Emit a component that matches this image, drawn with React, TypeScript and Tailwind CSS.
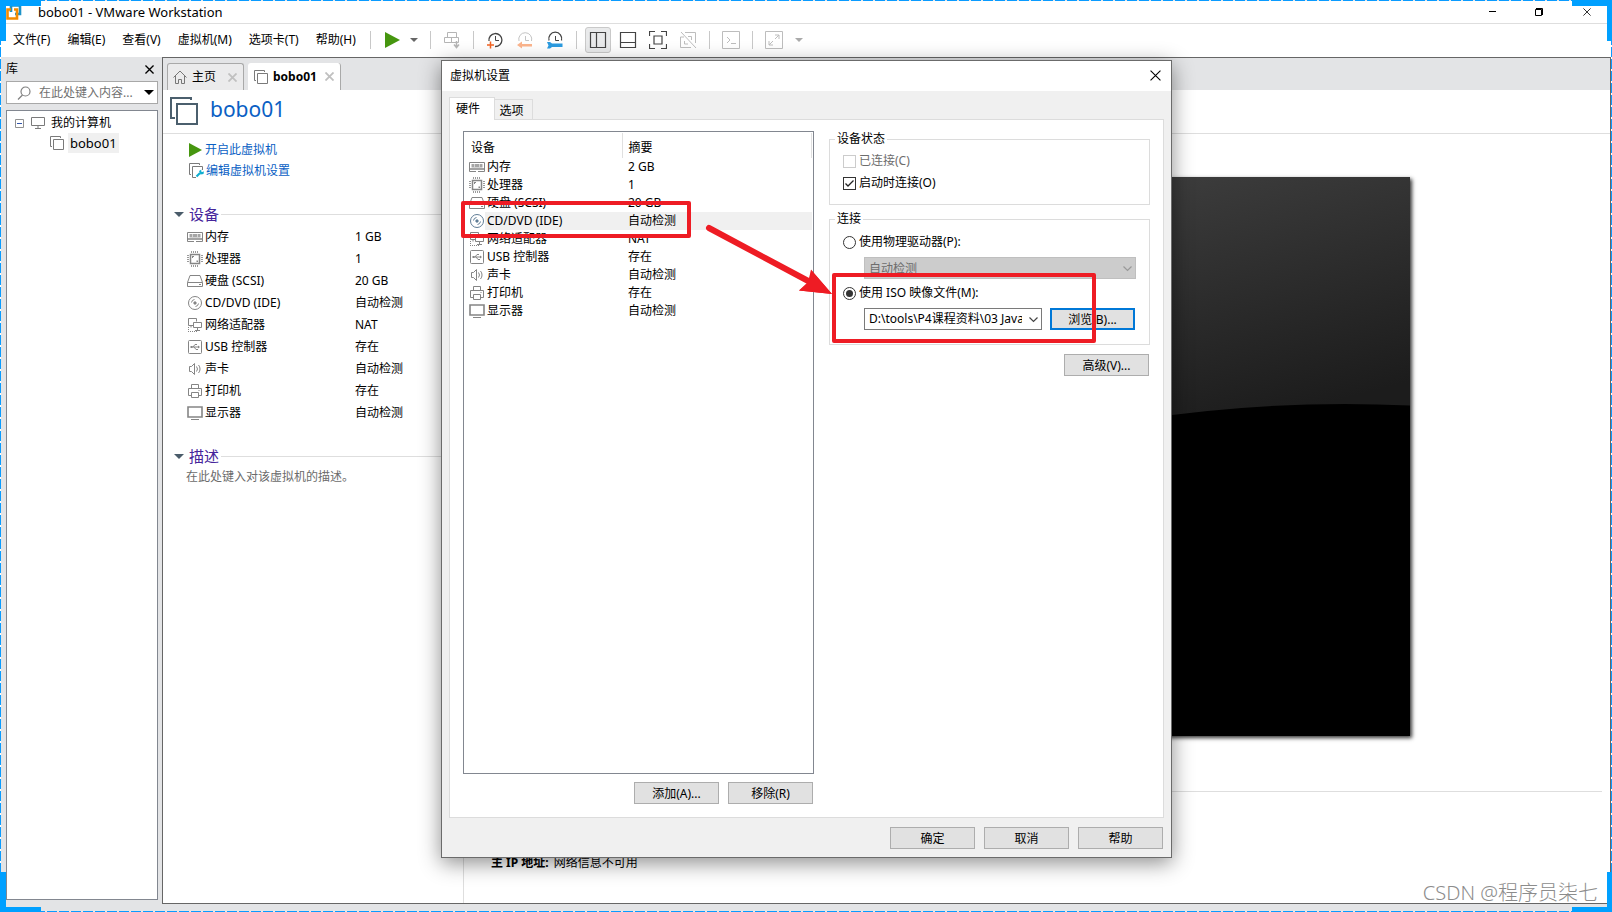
import type { ReactNode } from 'react';

type IconName = 'memory' | 'cpu' | 'disk' | 'cd' | 'network' | 'usb' | 'sound' | 'printer' | 'display';

// Devices of the virtual machine: the summary page and the settings dialog show different memory sizes
const DEVICES: { icon: IconName; name: string; summary: string; setting: string }[] = [
  { icon: 'memory', name: '内存', summary: '1 GB', setting: '2 GB' },
  { icon: 'cpu', name: '处理器', summary: '1', setting: '1' },
  { icon: 'disk', name: '硬盘 (SCSI)', summary: '20 GB', setting: '20 GB' },
  { icon: 'cd', name: 'CD/DVD (IDE)', summary: '自动检测', setting: '自动检测' },
  { icon: 'network', name: '网络适配器', summary: 'NAT', setting: 'NAT' },
  { icon: 'usb', name: 'USB 控制器', summary: '存在', setting: '存在' },
  { icon: 'sound', name: '声卡', summary: '自动检测', setting: '自动检测' },
  { icon: 'printer', name: '打印机', summary: '存在', setting: '存在' },
  { icon: 'display', name: '显示器', summary: '自动检测', setting: '自动检测' },
];

const MENUS = ['文件(F)', '编辑(E)', '查看(V)', '虚拟机(M)', '选项卡(T)', '帮助(H)'];

const ICONS: Record<IconName, ReactNode> = {
  memory: (
    <>
      <path d="M.5 3.5h15v9h-15z" />
      <path d="M1 10h14" strokeWidth="1.5" />
      <path d="M2.500 5h11v3.500h-11z" fill="#a5a5a5" stroke="none" />
      <path d="M5.500 5v3.500M10.500 5v3.500" stroke="#d5d5d5" />
      <path d="M7 12.500h2" stroke="#fff" />
    </>
  ),
  cpu: (
    <>
      <path d="M3.5 3.5h9v9h-9z" strokeWidth="1.5" />
      <path
        d="M4.5 0v2m2-2v2m2-2v2m2-2v2M4.5 14v2m2-2v2m2-2v2m2-2v2M0 4.5h2m-2 2h2m-2 2h2m-2 2h2M14 4.5h2m-2 2h2m-2 2h2m-2 2h2"
        stroke="#9a9a9a"
      />
      <path d="M5 5h2v1H6v1H5zM9.500 9.500h1.500v1.500H9.500z" fill="#858585" stroke="none" />
    </>
  ),
  disk: (
    <>
      <path d="M3 2.5h10l2.5 7v4H.5v-4z" />
      <path d="M.5 9.5h15M12 11.5h2" />
    </>
  ),
  cd: (
    <>
      <circle cx="8" cy="8" r="6.5" />
      <circle cx="8" cy="8" r="1.2" fill="currentColor" />
      <path d="M4.500 7.500A3.500 3.500 0 0 1 7.500 4.500M11.500 8.500A3.500 3.500 0 0 1 8.500 11.500" />
    </>
  ),
  network: (
    <>
      <path d="M6.500 8.500h-5v-7h8v3M4 8.500v2" />
      <path d="M6.500 5.500h8v5h-8zM10.500 10.500v3M8 13.500h5" />
      <path d="M1.500 10v5M1 14.500h10" strokeDasharray="1 1" />
    </>
  ),
  usb: (
    <>
      <rect x="1.500" y="1.500" width="13" height="13" rx="1" />
      <path d="M4 8h8M6 8l2-2.500h2M7 8l2 2.500h2" />
      <path d="M3.500 7h2v2h-2zM11 6.500 13 8l-2 1.500z" fill="#858585" stroke="none" />
    </>
  ),
  sound: (
    <>
      <path d="M2.500 5.500h2l3-3v11l-3-3h-2z" />
      <path d="M9.500 5.500a4 4 0 0 1 0 5M11.500 4a6 6 0 0 1 0 8" />
    </>
  ),
  printer: (
    <>
      <path d="M4.500 6V1.500h7V6" />
      <path d="M4 12.500H1.500v-7h13v7H12" />
      <path d="M4.500 9.500h7v5h-7zM11.500 7.500h1" />
    </>
  ),
  display: (
    <>
      <path d="M1 2h14v10H1z" strokeWidth="1.6" />
      <path d="M4 14.500h8" />
    </>
  ),
};

const DeviceIcon = ({ name, active = false }: { name: IconName; active?: boolean }) => (
  <svg
    width="16"
    height="16"
    viewBox="0 0 16 16"
    fill="none"
    stroke="currentColor"
    className={active ? 'shrink-0 text-[#5f7d96]' : 'shrink-0 text-[#858585]'}
  >
    {ICONS[name]}
  </svg>
);

const VmIcon = ({ size = 14, color = '#7a7a7a', wide = false }: { size?: number; color?: string; wide?: boolean }) => (
  <svg width={size} height={size} viewBox={wide ? '0 0 28 28' : '0 0 14 14'} fill="none" stroke={color} className="shrink-0">
    {wide ? (
      <path d="M21 3V1H1v20h4M7 7h20v20H7z" strokeWidth="2" />
    ) : (
      <path d="M10.500 2V.500H.500v10H2M3.500 3.500h10v10h-10z" />
    )}
  </svg>
);

const Cross = ({ size = 9, color = '#000', weight = 1 }: { size?: number; color?: string; weight?: number }) => (
  <svg width={size} height={size} viewBox="0 0 10 10" fill="none" stroke={color} strokeWidth={weight}>
    <path d="M.500.500l9 9M9.500.500l-9 9" />
  </svg>
);

const Play = ({ width, height }: { width: number; height: number }) => (
  <svg width={width} height={height} viewBox="0 0 14 16" preserveAspectRatio="none" className="shrink-0">
    <path d="M0 0l14 8-14 8z" fill="#46960f" />
  </svg>
);

const Caret = ({ color = '#555', width = 8 }: { color?: string; width?: number }) => (
  <svg width={width} height={width / 2} viewBox="0 0 8 4" className="shrink-0">
    <path d="M0 0h8L4 4z" fill={color} />
  </svg>
);

const Separator = () => <span className="h-[18px] w-px bg-[#c8c8c8]" />;

const ToolButton = ({ label, pressed = false, children }: { label: string; pressed?: boolean; children: ReactNode }) => (
  <button
    type="button"
    aria-label={label}
    className={
      pressed
        ? 'flex size-[26px] items-center justify-center rounded-[3px] border border-[#c9c9c9] bg-[#e9eaeb]'
        : 'flex size-[26px] items-center justify-center'
    }
  >
    <svg width="18" height="18" viewBox="0 0 18 18" fill="none" stroke="#444">
      {children}
    </svg>
  </button>
);

const Toolbar = () => (
  <div className="flex items-center">
    <Separator />
    <button type="button" aria-label="开启" className="ml-3.5 flex items-center gap-2.5">
      <Play width={15} height={16} />
      <Caret color="#666" />
    </button>
    <div className="ml-3 flex items-center gap-2">
      <Separator />
      <ToolButton label="Ctrl+Alt+Del">
        <g stroke="#b5b5b5">
          <path d="M4.500 1.500h9v5h-9zM1.500 6.500h7v5h-7zM8.500 6.500h7v5h-7z" />
          <path d="M13.500 10v6M11 13.500l2.500 3 2.500-3" strokeWidth="1.500" />
        </g>
      </ToolButton>
      <Separator />
    </div>
    <div className="mx-2 flex items-center gap-1">
      <ToolButton label="快照">
        <path d="M3 10A6.500 6.500 0 1 1 9 15.500" strokeWidth="1.300" />
        <path d="M9.500 5v4.500H13" />
        <path d="M4.500 10.500v7M1 14h7" stroke="#f26322" strokeWidth="1.500" />
      </ToolButton>
      <ToolButton label="恢复快照">
        <path d="M3 10a6.500 6.500 0 1 1 12.500 0" stroke="#c4c4c4" />
        <path d="M9.500 5v4.500H13" stroke="#c4c4c4" />
        <path d="M1 14l5-3.500V13h10v2.500H6v2z" fill="#fbb48c" stroke="none" />
      </ToolButton>
      <ToolButton label="管理快照">
        <path d="M3 9.500a6.500 6.500 0 1 1 12.500 0" strokeWidth="1.300" />
        <path d="M9.500 5v4.500H13" />
        <path d="M1 11h3l2 1.500h10.500v3.500H6l-2 1.500H1l1.500-3z" fill="#2b9be0" stroke="none" />
      </ToolButton>
    </div>
    <Separator />
    <div className="mx-2 flex items-center gap-1">
      <ToolButton label="库" pressed>
        <path d="M1.500 1.500h15v15h-15zM7.500 1.500v15" strokeWidth="1.200" />
      </ToolButton>
      <ToolButton label="缩略图栏">
        <path d="M1.500 1.500h15v15h-15zM1.500 11.500h15" strokeWidth="1.200" />
      </ToolButton>
      <ToolButton label="全屏">
        <path d="M.500 5V.500H6M12 .500h5.500V5M17.500 13v4.500H12M6 17.500H.500V13" strokeWidth="1.200" />
        <path d="M5 5h8v8H5z" strokeWidth="1.200" />
      </ToolButton>
      <ToolButton label="Unity">
        <g stroke="#bdbdbd">
          <path d="M2 1l15 16M6 1.500h10.500V12M12 16.500H1.500V6H5M12.500 9V5.500H9M5.500 10v3H9" />
        </g>
      </ToolButton>
    </div>
    <div className="flex items-center gap-2">
      <Separator />
      <ToolButton label="控制台">
        <path d="M.500.500h17v17H.500zM5 6l3 3-3 3M9 12.500h5" stroke="#bdbdbd" />
      </ToolButton>
      <Separator />
      <ToolButton label="拉伸">
        <path d="M.500.500h17v17H.500z" stroke="#bdbdbd" />
        <path d="M10 4h4v4M14 4l-4 4M4 10v4h4M4 14l4-4" stroke="#bdbdbd" />
      </ToolButton>
      <Caret color="#aaa" width={8} />
    </div>
  </div>
);

const TitleBar = () => (
  <header className="flex h-6 shrink-0 items-center border-b border-[#dedede] pl-1.5 text-black">
    <svg width="16" height="16" viewBox="0 0 16 16" fill="none" strokeWidth="2.600">
      <path d="M5 8V1.500h9V10H9" stroke="#1d93c8" />
      <path d="M5 5.500H1.500v9H11V5.500H8" stroke="#f38b00" />
    </svg>
    <h1 className="ml-4 flex-1 text-[13px]">bobo01 - VMware Workstation</h1>
    <div className="flex items-center">
      <button type="button" aria-label="最小化" className="flex h-5 w-12 items-center justify-center">
        <span className="h-px w-[7px] bg-black" />
      </button>
      <button type="button" aria-label="还原" className="flex h-5 w-[46px] items-center justify-center">
        <svg width="8" height="8" viewBox="0 0 8 8" fill="none" stroke="#000">
          <path d="M.500 1.500h6v6h-6zM1 .500h6.500V7" />
        </svg>
      </button>
      <button type="button" aria-label="关闭" className="flex h-5 w-[50px] items-center justify-center">
        <Cross size={8} />
      </button>
    </div>
  </header>
);

const Library = () => (
  <aside className="flex w-[152px] shrink-0 flex-col">
    <div className="flex h-6 items-center justify-between pr-1">
      <h2>库</h2>
      <button type="button" aria-label="关闭库">
        <Cross weight={1.5} />
      </button>
    </div>
    <div className="flex h-[23px] shrink-0 items-center border border-[#a8a8a8] bg-white pr-[3px] pl-2.5">
      <svg width="14" height="14" viewBox="0 0 14 14" fill="none" stroke="#808080" strokeWidth="1.200">
        <circle cx="8.500" cy="5.500" r="4.500" />
        <path d="M5.500 9L1 13.500" />
      </svg>
      <input
        aria-label="搜索"
        placeholder="在此处键入内容..."
        className="ml-2 w-0 flex-1 bg-transparent outline-none placeholder:text-[#707070]"
      />
      <Caret color="#000" width={10} />
    </div>
    <div className="mt-1.5 flex-1 border border-[#828790] bg-white py-0.5 pl-2">
      <div className="flex h-5 items-center">
        <svg width="9" height="9" viewBox="0 0 9 9" fill="#fff" stroke="#919191">
          <path d="M.500.500h8v8h-8z" />
          <path d="M2 4.500h5" stroke="#3355aa" />
        </svg>
        <svg width="14" height="12" viewBox="0 0 14 12" fill="none" stroke="#7a7a7a" className="mr-1.5 ml-[7px]">
          <path d="M.500.500h13v8H.500zM7 9v2M4 11.500h6" />
        </svg>
        <span>我的计算机</span>
      </div>
      <div className="flex h-5 items-center pl-[35px]">
        <VmIcon />
        <span className="ml-1 bg-[#f0f0f0] px-0.5 text-[13px] leading-5">bobo01</span>
      </div>
    </div>
  </aside>
);

const Tabs = () => (
  <div className="flex h-8 shrink-0 items-end gap-1 bg-[#e3e4e6] pl-1">
    <div className="flex h-[27px] w-[77px] items-center rounded-t-[3px] border border-b-0 border-[#a9a9a9] bg-[#ebebec] pr-1.5 pl-[5px]">
      <svg width="14" height="14" viewBox="0 0 14 14" fill="none" stroke="#777">
        <path d="M.500 7.500L7 1l6.500 6.500M2.500 6v7.500h3v-4h3v4h3V6" />
      </svg>
      <button type="button" className="ml-[5px] flex-1 text-left">
        主页
      </button>
      <Cross color="#c0c0c0" weight={2} />
    </div>
    <div className="flex h-[27px] w-[93px] items-center rounded-t-[3px] border-r border-[#a9a9a9] bg-white px-1.5">
      <VmIcon />
      <button type="button" className="ml-[5px] flex-1 text-left font-bold">
        bobo01
      </button>
      <Cross color="#c0c0c0" weight={2} />
    </div>
  </div>
);

const SectionTitle = ({ children }: { children: ReactNode }) => (
  <div className="flex h-6 items-center pl-[11px]">
    <Caret color="#4a5c6a" width={10} />
    <h3 className="mr-0.5 ml-[5px] text-[15px] text-[#46259b]">{children}</h3>
    <span className="h-px flex-1 bg-[#dedede]" />
  </div>
);

const Summary = () => (
  <div className="w-[301px] shrink-0 border-r border-[#dedede]">
    <div className="flex flex-col pt-[5px] pl-[26px] text-[#0a5fc4]">
      <a href="#power-on" className="flex h-[21px] items-center gap-[3px]">
        <Play width={13} height={14} />
        开启此虚拟机
      </a>
      <a href="#settings" className="flex h-[21px] items-center gap-0.5">
        <svg width="15" height="15" viewBox="0 0 15 15" fill="none" stroke="#7a7a7a" className="shrink-0">
          <path d="M10.500 2V.500H.500v11H2M7 14.500H3.500v-11h10V7" />
          <path d="M7.500 13.500L11 10" stroke="#10aed0" strokeWidth="2.200" />
          <path d="M10 8l2.500-1.500-.500 2 2 .500L15 8l-.500 3-3 .500z" fill="#10aed0" stroke="none" />
        </svg>
        编辑虚拟机设置
      </a>
    </div>
    <div className="mt-[21px]">
      <SectionTitle>设备</SectionTitle>
      <table className="ml-6">
        <tbody>
          {DEVICES.map((device) => (
            <tr key={device.name} className="h-[22px]">
              <td className="w-[168px] p-0">
                <span className="flex items-center gap-0.5">
                  <DeviceIcon name={device.icon} />
                  {device.name}
                </span>
              </td>
              <td className="p-0">{device.summary}</td>
            </tr>
          ))}
        </tbody>
      </table>
    </div>
    <div className="mt-5">
      <SectionTitle>描述</SectionTitle>
      <p className="pl-[23px] text-[#6b6b6b]">在此处键入对该虚拟机的描述。</p>
    </div>
  </div>
);

const Preview = () => (
  <div className="min-w-0 flex-1 overflow-hidden">
    <svg viewBox="0 0 745 559" className="mx-auto mt-[43px] block w-[745px] shadow-[2px_2px_4px_rgba(0,0,0,0.8)]">
      <defs>
        <linearGradient id="gloss" gradientUnits="userSpaceOnUse" x1="500" y1="-30" x2="575" y2="250">
          <stop offset="0" stopColor="#404040" />
          <stop offset="1" stopColor="#1c1c1c" />
        </linearGradient>
      </defs>
      <path d="M0 0h745v559H0z" fill="#000" />
      <path d="M0 0h745v228.500Q372.500 210.700 0 397.400z" fill="url(#gloss)" />
    </svg>
    <div className="mt-[55px] mr-2 border-t border-[#dedede] pt-[62px] pl-[27px]">
      <span className="font-bold">主 IP 地址:</span> <span className="ml-0.5">网络信息不可用</span>
    </div>
  </div>
);

const PushButton = ({ children, focused = false }: { children: ReactNode; focused?: boolean }) => (
  <button
    type="button"
    className={
      focused
        ? 'h-[22px] w-[85px] border-2 border-[#0078d7] bg-[#e1e1e1] pt-0.5 leading-4'
        : 'h-[22px] w-[85px] border border-[#adadad] bg-[#e1e1e1] pt-0.5 leading-[18px]'
    }
  >
    {children}
  </button>
);

const Chevron = ({ color }: { color: string }) => (
  <svg
    width="9"
    height="6"
    viewBox="0 0 9 6"
    fill="none"
    stroke={color}
    strokeWidth="1.200"
    className="pointer-events-none absolute top-[9px] right-1"
  >
    <path d="M.500.500l4 4 4-4" />
  </svg>
);

const DeviceList = () => (
  <div className="flex w-[351px] flex-col">
    <div className="h-[643px] border border-[#828790] p-px">
      <table className="w-full table-fixed text-left">
        <thead>
          <tr className="h-[25px]">
            <th className="w-[157px] border-r border-[#e0e0e0] p-0 pt-1 pl-1.5 font-normal">设备</th>
            <th className="border-r border-[#e0e0e0] p-0 pt-1 pl-1.5 font-normal">摘要</th>
          </tr>
        </thead>
        <tbody>
          {DEVICES.map((device) => {
            const selected = device.icon === 'cd';
            return (
              <tr key={device.name} className="h-[18px]">
                <td className="p-0 pl-1">
                  <span className="flex h-[18px] items-center">
                    <DeviceIcon name={device.icon} active={selected} />
                    <span className={selected ? 'flex-1 bg-[#f0f0f0] pl-0.5' : 'flex-1 pl-0.5'}>{device.name}</span>
                  </span>
                </td>
                <td className={selected ? 'bg-[#f0f0f0] p-0 pl-1.5' : 'p-0 pl-1.5'}>{device.setting}</td>
              </tr>
            );
          })}
        </tbody>
      </table>
    </div>
    <div className="mt-2 flex justify-end gap-[9px] pr-px">
      <PushButton>添加(A)...</PushButton>
      <PushButton>移除(R)</PushButton>
    </div>
  </div>
);

const RADIO =
  'size-[13px] appearance-none rounded-full border border-[#333] bg-white bg-clip-content p-0.5 checked:bg-[#333]';

const DeviceOptions = () => (
  <div className="flex flex-1 flex-col">
    <fieldset className="h-[74px] border border-[#dcdcdc] pl-[13px]">
      <legend className="-ml-2 px-0.5 leading-4">设备状态</legend>
      <label className="mt-[3px] flex h-[22px] items-center gap-[3px] text-[#6d6d6d]">
        <input type="checkbox" disabled className="size-[13px] appearance-none border border-[#ccc] bg-white" />
        已连接(C)
      </label>
      <label className="flex h-[22px] items-center gap-[3px]">
        <span className="relative flex">
          <input type="checkbox" defaultChecked className="size-[13px] appearance-none border border-[#333] bg-white" />
          <svg
            width="13"
            height="13"
            viewBox="0 0 13 13"
            fill="none"
            stroke="#222"
            strokeWidth="1.300"
            className="pointer-events-none absolute inset-0"
          >
            <path d="M2.500 6.500L5 9l5.500-5.500" />
          </svg>
        </span>
        启动时连接(O)
      </label>
    </fieldset>
    <fieldset className="mt-1.5 h-[134px] border border-[#dcdcdc] pl-[13px]">
      <legend className="-ml-2 px-0.5 leading-4">连接</legend>
      <label className="mt-1 flex h-[22px] items-center gap-[3px]">
        <input type="radio" name="source" className={RADIO} />
        使用物理驱动器(P):
      </label>
      <div className="relative mt-1 ml-[21px] w-[272px]">
        <select
          aria-label="物理驱动器"
          disabled
          className="block h-[22px] w-full appearance-none border border-[#bfbfbf] bg-[#ccc] pt-0.5 pl-1 text-[#6d6d6d] opacity-100"
        >
          <option>自动检测</option>
        </select>
        <Chevron color="#999" />
      </div>
      <label className="mt-[3px] flex h-[22px] items-center gap-[3px]">
        <input type="radio" name="source" defaultChecked className={RADIO} />
        使用 ISO 映像文件(M):
      </label>
      <div className="mt-1 ml-[21px] flex items-center gap-2">
        <div className="relative w-[178px]">
          <select
            aria-label="ISO 映像文件"
            className="block h-[22px] w-full appearance-none border border-[#7a7a7a] bg-white pr-[19px] pl-1"
          >
            <option>D:\tools\P4课程资料\03 Java</option>
          </select>
          <Chevron color="#444" />
        </div>
        <PushButton focused>浏览(B)...</PushButton>
      </div>
    </fieldset>
    <div className="mt-[9px] flex justify-end pr-px">
      <PushButton>高级(V)...</PushButton>
    </div>
  </div>
);

const SettingsDialog = () => (
  <section
    role="dialog"
    aria-label="虚拟机设置"
    className="absolute top-[60px] left-[441px] w-[731px] border border-[#6b6b6b] bg-[#f0f0f0] shadow-[0_5px_20px_rgba(0,0,0,0.45)]"
  >
    <div className="flex h-[30px] items-center justify-between bg-white pr-2.5 pb-px pl-2">
      <h2>虚拟机设置</h2>
      <button type="button" aria-label="关闭设置">
        <Cross size={11} />
      </button>
    </div>
    <div className="px-[7px] pt-1.5">
      <div className="flex items-end">
        <button type="button" className="relative z-10 -mb-px h-[23px] w-[46px] border border-b-0 border-[#dcdcdc] bg-white pr-2">
          硬件
        </button>
        <button type="button" className="-ml-px h-5 w-[39px] border border-b-0 border-[#dcdcdc] pt-0.5 pr-1">
          选项
        </button>
      </div>
      <div className="flex gap-[15px] border border-[#dcdcdc] bg-white pt-[11px] pr-[13px] pb-[13px] pl-[13px]">
        <DeviceList />
        <DeviceOptions />
      </div>
    </div>
    <div className="flex justify-end gap-[9px] pt-[9px] pr-2 pb-2">
      <PushButton>确定</PushButton>
      <PushButton>取消</PushButton>
      <PushButton>帮助</PushButton>
    </div>

    {/* Red markers over the CD/DVD row and the ISO path */}
    <div className="pointer-events-none absolute top-[140px] left-[19px] h-[37px] w-[230px] rounded-[2px] border-4 border-[#ee1c24]" />
    <div className="pointer-events-none absolute top-[212px] left-[390px] h-[70px] w-[264px] rounded-[2px] border-4 border-[#ee1c24]" />
    <svg width="130" height="80" viewBox="0 0 130 80" className="pointer-events-none absolute top-[160px] left-[262px]">
      <path d="M5 7l103 55" stroke="#ee1c24" strokeWidth="6" strokeLinecap="round" />
      <path d="M128 73L95 69.500l9-8.500 3-12z" fill="#ee1c24" />
      <path d="M128 73L107 48.500l-1 12-11 9z" fill="#ee1c24" />
    </svg>
  </section>
);

// Dashed blue capture frame with solid corners
const CaptureFrame = () => (
  <div className="pointer-events-none absolute inset-0">
    <div className="absolute inset-x-0 top-0 h-px bg-[repeating-linear-gradient(90deg,#0a9bff_0_9px,#e8e8e8_9px_11px,#0a9bff_11px_12px)]" />
    <div className="absolute inset-x-0 bottom-0 h-px bg-[repeating-linear-gradient(90deg,#0a9bff_0_9px,#e8e8e8_9px_11px,#0a9bff_11px_12px)]" />
    <div className="absolute inset-y-0 left-0 w-px bg-[repeating-linear-gradient(180deg,#0a9bff_0_9px,#fff_9px_11px,#0a9bff_11px_12px)]" />
    <div className="absolute inset-y-0 right-0 w-px bg-[repeating-linear-gradient(180deg,#0a9bff_0_9px,#fff_9px_11px,#0a9bff_11px_12px)]" />
    <div className="absolute top-0 left-0 size-[41px] border-t-6 border-l-6 border-[#00a0ff]" />
    <div className="absolute top-0 right-0 h-[41px] w-10 border-t-6 border-r-5 border-[#00a0ff]" />
    <div className="absolute bottom-0 left-0 h-10 w-[41px] border-b-5 border-l-6 border-[#00a0ff]" />
    <div className="absolute right-0 bottom-0 size-10 border-r-5 border-b-5 border-[#00a0ff]" />
  </div>
);

const App = () => {
  return (
    <div className="relative flex h-screen flex-col overflow-hidden bg-white font-['Noto_Sans','Noto_Sans_CJK_SC',sans-serif] text-xs leading-[18px] text-black">
      <TitleBar />
      <nav className="flex h-[33px] shrink-0 items-center pb-0.5 pl-[5px]">
        <div className="mr-1.5 flex gap-px">
          {MENUS.map((menu) => (
            <button key={menu} type="button" className="px-2">
              {menu}
            </button>
          ))}
        </div>
        <Toolbar />
      </nav>

      <div className="flex min-h-0 flex-1 bg-[#e3e4e6] pl-1.5">
        <div className="flex pb-3">
          <Library />
        </div>
        <main className="mr-px mb-2 ml-1 flex min-w-0 flex-1 flex-col border border-[#666] bg-white">
          <Tabs />
          <div className="flex h-11 shrink-0 items-center border-b border-[#dedede] pb-0.5 pl-[7px]">
            <VmIcon size={28} color="#4b5f6d" wide />
            <h2 className="mb-1 ml-3 text-[21px] text-[#0a5fc4]">bobo01</h2>
          </div>
          <div className="flex min-h-0 flex-1">
            <Summary />
            <Preview />
          </div>
        </main>
      </div>

      <SettingsDialog />
      <div className="absolute right-[14px] bottom-1 text-xl leading-[30px] font-light text-[#8c8c8c] [text-shadow:1px_1px_0_#fff]">
        CSDN @程序员柒七
      </div>
      <CaptureFrame />
    </div>
  );
};

export default App;
